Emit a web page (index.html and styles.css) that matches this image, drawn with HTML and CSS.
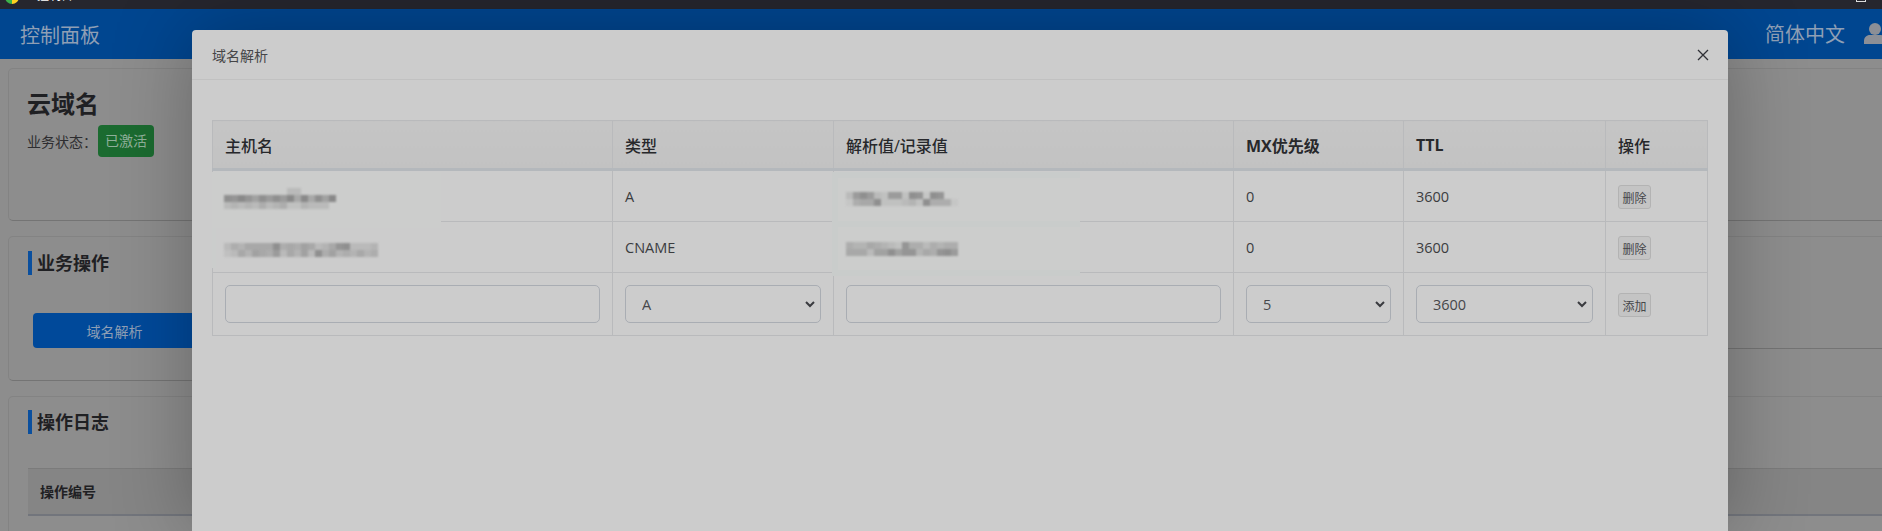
FILE: index.html

```html
<!DOCTYPE html>
<html lang="zh-CN">
<head>
  <meta charset="UTF-8" />
  <meta name="viewport" content="width=device-width, initial-scale=1.0" />
  <title>控制面板</title>
  <link rel="stylesheet" href="styles.css">
</head>
<body>

<div class="tabstrip">
  <span class="tab-icon"></span>
  <span class="tab-title">控制台</span>
  <span class="tab-max"></span>
</div>

<nav class="navbar">
  <span class="brand">控制面板</span>
  <span class="nav-right">
    <span class="lang">简体中文</span>
    <svg class="user-icon" viewBox="0 0 22 21" width="22" height="21"><circle cx="11" cy="6" r="6"/><path d="M0 21v-3c0-3.500 2.500-6 6-6h10c3.500 0 6 2.500 6 6v3z"/></svg>
  </span>
</nav>

<main class="page">
  <section class="card card-info">
    <h1>云域名</h1>
    <div class="status">业务状态：<span class="badge">已激活</span></div>
  </section>
  <div class="ops-row">
    <section class="card card-ops">
      <h2 class="card-title">业务操作</h2>
      <button class="btn-primary">域名解析</button>
    </section>
    <div class="card card-ops-tail"></div>
  </div>
  <section class="card card-log">
    <h2 class="card-title">操作日志</h2>
    <div class="log-head">操作编号</div>
  </section>
</main>

<div class="modal">
  <div class="modal-header">
    <span class="modal-title">域名解析</span>
    <svg class="close" viewBox="0 0 12 12" width="12" height="12"><path d="M1 1l10 10M11 1L1 11"/></svg>
  </div>
  <div class="modal-body">
    <div class="table-wrap">
      <div class="patch patch-name"></div>
      <div class="patch patch-value"></div>
      <table class="dns">
        <colgroup>
          <col class="c-host"><col class="c-type"><col class="c-val"><col class="c-mx"><col class="c-ttl"><col class="c-op">
        </colgroup>
        <thead>
          <tr><th>主机名</th><th>类型</th><th>解析值/记录值</th><th>MX优先级</th><th>TTL</th><th>操作</th></tr>
        </thead>
        <tbody>
          <tr>
            <td><svg class="mosaic m1" width="112" height="21" data-cells="0000000003300000 a9b97a8a8d6b6a7c 3434353452243330"></svg></td>
            <td>A</td>
            <td><svg class="mosaic m3" width="112" height="14" data-cells="38a832882a91a90 1566a222342a5551"></svg></td>
            <td>0</td><td>3600</td>
            <td><button class="btn-small">删除</button></td>
          </tr>
          <tr>
            <td><svg class="mosaic m2" width="154" height="14" data-cells="3546666a565763469a333432 2364765836473a5745464532"></svg></td>
            <td>CNAME</td>
            <td><svg class="mosaic m4" width="112" height="14" data-cells="5446543295535455 666377a7994659a8"></svg></td>
            <td>0</td><td>3600</td>
            <td><button class="btn-small">删除</button></td>
          </tr>
          <tr class="form-row">
            <td><input type="text" class="field"></td>
            <td><select class="field pick"><option>A</option></select></td>
            <td><input type="text" class="field"></td>
            <td><select class="field pick"><option>5</option></select></td>
            <td><select class="field pick"><option>3600</option></select></td>
            <td><button class="btn-small">添加</button></td>
          </tr>
        </tbody>
      </table>
    </div>
  </div>
</div>

<script src="mosaic.js"></script>
</body>
</html>
```

FILE: styles.css

```css
html, body { height: 100%; }
body {
  margin: 0;
  height: 531px;
  overflow: hidden;
  position: relative;
  background: #8d8d8d;
  font-family: "Open Sans", "Noto Sans CJK SC", sans-serif;
  color: #232427;
}

.tabstrip {
  height: 9px;
  background: #26262e;
  overflow: hidden;
  display: flex;
  align-items: flex-end;
  color: #fff;
}
.tab-icon {
  flex: none;
  width: 14px;
  height: 14px;
  margin: 0 0 5px 5px;
  border-radius: 50%;
  background: conic-gradient(#e44 0 25%, #ffd21f 0 50%, #3cb34a 0 75%, #e8862a 0);
}
.tab-title { flex: none; margin: 0 0 6px 18px; font-size: 12px; line-height: 14px; }
.tab-max {
  flex: none;
  width: 8px;
  height: 8px;
  margin: 0 16px 7px auto;
  border: 1px solid #ddd;
}

.navbar {
  height: 50px;
  box-sizing: border-box;
  padding: 0 0 0 20px;
  background: #004690;
  display: flex;
  align-items: center;
  justify-content: space-between;
  color: #8f9fb5;
}
.brand { font-size: 20px; }
.nav-right { display: flex; align-items: center; gap: 19px; font-size: 20px; margin: -2px -4px 0 0; }
.user-icon { flex: none; fill: #8c8f96; }

.page { padding: 9px 0 0 8px; display: flex; flex-direction: column; gap: 15px; width: 1920px; }
.card {
  border: 1px solid #838383;
  border-bottom-color: #747474;
  border-radius: 5px;
  box-sizing: border-box;
}
.card-info { height: 153px; padding: 22px 18px; }
.ops-row { display: flex; align-items: flex-start; }
.card-ops { flex: none; width: 1000px; height: 145px; padding: 14px 19px; }
.card-ops-tail { flex: 1; height: 113px; }
.card-log { height: 200px; padding: 13px 19px; }

h1 { margin: 0; font-size: 24px; line-height: 26px; font-weight: 700; color: #1f2023; }
.status { display: flex; align-items: center; margin-top: 8px; font-size: 14px; color: #2d2d30; }
.badge {
  margin-left: 1px;
  padding: 0 7px;
  height: 32px;
  line-height: 31px;
  border-radius: 4px;
  background: #1b6b30;
  color: #8fb09a;
}
.card-title {
  margin: 0;
  padding-left: 5px;
  border-left: 4px solid #0a4f9e;
  font-size: 18px;
  line-height: 24px;
  font-weight: 700;
  color: #1f2023;
}
.btn-primary {
  display: block;
  margin: 38px 0 0 5px;
  width: 163px;
  height: 35px;
  padding: 0;
  border: none;
  border-radius: 4px;
  background: #00499a;
  color: #8f9fb5;
  font: 14px "Open Sans", "Noto Sans CJK SC", sans-serif;
}
.log-head {
  margin-top: 34px;
  padding: 0 12px;
  height: 48px;
  line-height: 46px;
  box-sizing: border-box;
  background: #858585;
  border-top: 1px solid #7b7b7b;
  border-bottom: 2px solid #72757c;
  font-size: 14px;
  font-weight: 700;
  color: #1f2023;
}

.modal {
  position: absolute;
  left: 192px;
  top: 30px;
  width: 1536px;
  height: 501px;
  background: #cccccc;
  border-radius: 4px 4px 0 0;
  box-shadow: 0 0 80px rgba(0, 0, 0, .28);
}
.modal-header {
  height: 50px;
  box-sizing: border-box;
  padding: 0 19px 0 20px;
  border-bottom: 1px solid #c1c1c1;
  display: flex;
  align-items: center;
  justify-content: space-between;
}
.modal-title { font-size: 14px; color: #454547; }
.close { stroke: #2f3036; stroke-width: 1.300; fill: none; }
.modal-body { padding: 40px 20px; }

.table-wrap { position: relative; }
.dns {
  width: 1495px;
  table-layout: fixed;
  border-collapse: collapse;
  font-size: 14.500px;
  color: #3b3c3f;
}
.c-host { width: 400px; }
.c-type { width: 221px; }
.c-val { width: 400px; }
.c-mx { width: 170px; }
.c-ttl { width: 202px; }
.c-op { width: 102px; }
.dns th, .dns td { border: 1px solid #b9babc; padding: 0 12px; vertical-align: middle; }
.dns th {
  height: 47px;
  background: linear-gradient(#c5c5c5, #c2c2c2);
  border-bottom: 3px solid #b4b8bc;
  text-align: left;
  font-size: 16px;
  font-weight: 700;
  color: #27282b;
}
.dns th:first-child, .dns th:nth-child(2), .dns th:nth-child(3), .dns th:last-child { font-weight: 500; }
.dns td { height: 50px; }
.dns .form-row td { height: 62px; }

.field {
  display: block;
  box-sizing: border-box;
  width: 100%;
  height: 38px;
  margin: 0;
  background: transparent;
  border: 1px solid #a9adb3;
  border-radius: 5px;
  font: 14.500px "Open Sans", "Noto Sans CJK SC", sans-serif;
  color: #46474a;
}
.pick {
  appearance: none;
  padding-left: 16px;
  background: url("data:image/svg+xml,%3Csvg xmlns='http://www.w3.org/2000/svg' viewBox='0 0 10 7'%3E%3Cpath d='M1 1l4 4 4-4' fill='none' stroke='%233a3b3f' stroke-width='2'/%3E%3C/svg%3E") no-repeat right 5px center / 10px 7px;
}
.btn-small {
  display: block;
  margin-top: 2px;
  width: 33px;
  height: 24px;
  padding: 0;
  background: #c4c4c4;
  border: 1px solid #b3b3b3;
  border-radius: 3px;
  font: 12px "Noto Sans CJK SC", sans-serif;
  color: #46474a;
}

.mosaic { display: block; position: relative; z-index: 2; filter: blur(.8px); }
.m1 { margin: 5px 0 0 -1px; }
.m2 { margin: 6px 0 0 -1px; }
.m3 { margin: 6px 0 0 0; }
.m4 { margin: 3px 0 0 0; }

.patch { position: absolute; z-index: 1; background: #cccdcc; }
.patch-name { left: 0; top: 52px; width: 229px; height: 56px; }
.patch-name::after {
  content: "";
  position: absolute;
  left: 0;
  top: 56px;
  width: 4px;
  height: 40px;
  background: #cbcdcc;
}
.patch-value {
  left: 620px;
  top: 52px;
  width: 242px;
  height: 92px;
  border: 6px solid #c9cccb;
  border-right: none;
}
.patch-value::after {
  content: "";
  position: absolute;
  left: 0;
  right: 0;
  top: 43px;
  height: 6px;
  background: #c9cccb;
}
```

FILE: mosaic.js

```js
// fill the redacted cells with grey squares, one hex digit per square (0 = none)
document.querySelectorAll(".mosaic").forEach(svg => {
  const rows = svg.dataset.cells.split(" ");
  let out = "";
  rows.forEach((row, y) => {
    [...row].forEach((ch, x) => {
      const v = parseInt(ch, 16);
      if (v) out += `<rect x="${x * 7}" y="${y * 7}" width="7" height="7" fill="#888" opacity="${(v * 0.09).toFixed(2)}"/>`;
    });
  });
  svg.innerHTML = out;
});
```
